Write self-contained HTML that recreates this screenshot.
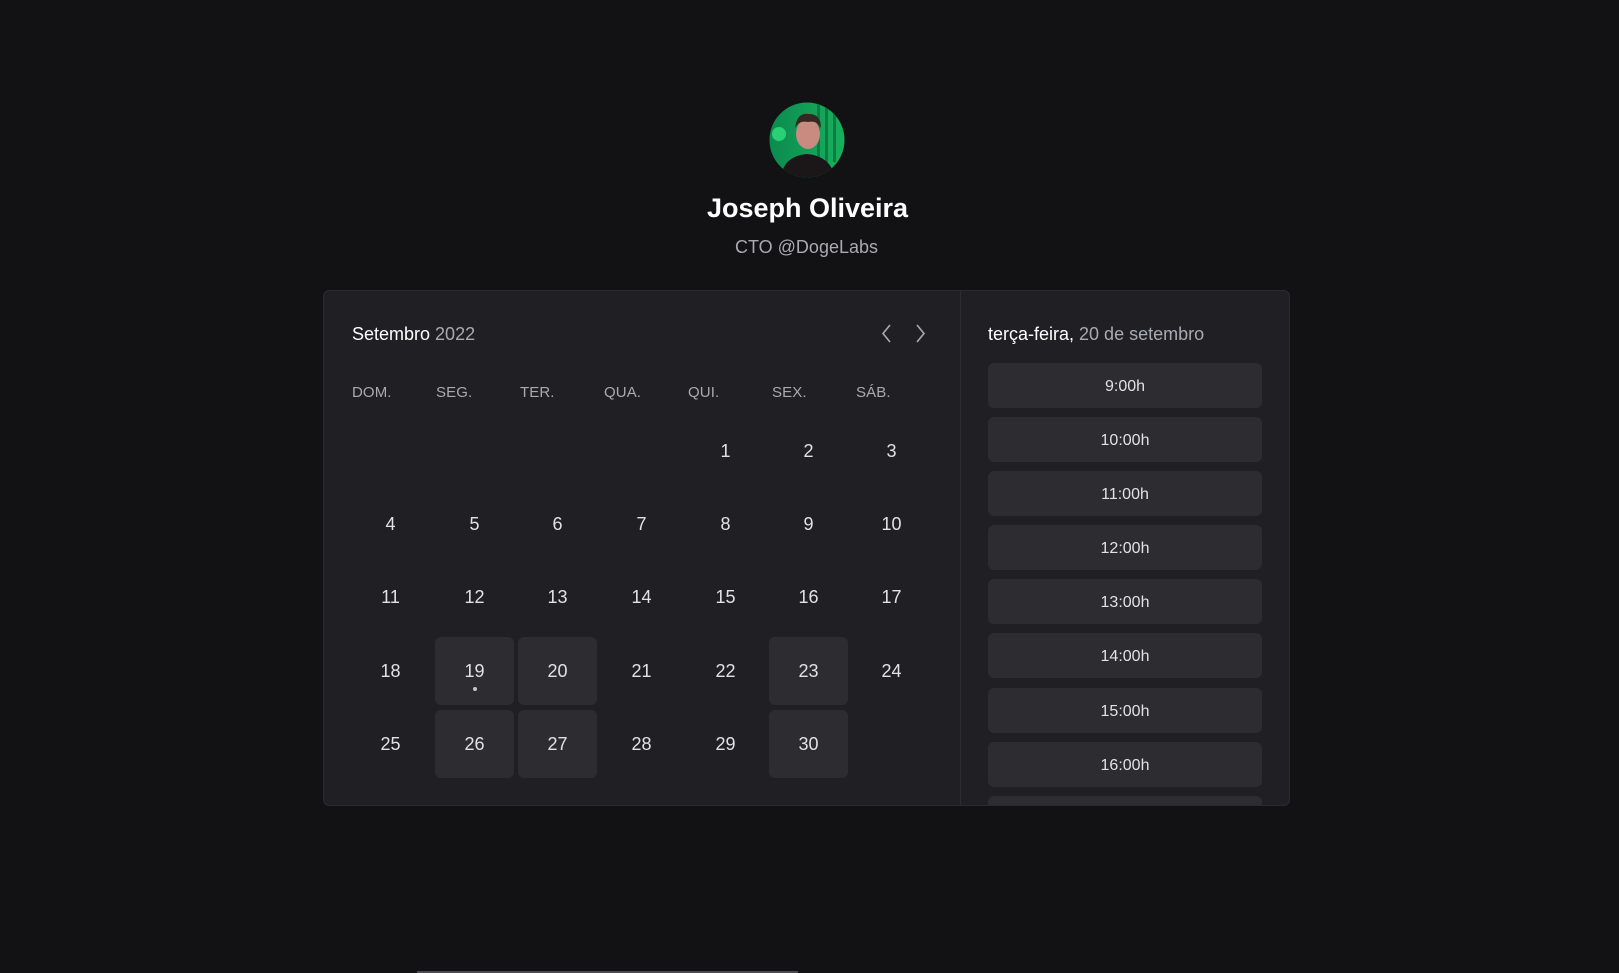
<!DOCTYPE html>
<html><head><meta charset="utf-8"><style>
*{margin:0;padding:0;box-sizing:border-box}
body{width:1619px;height:973px;background:#121214;font-family:"Liberation Sans",sans-serif;position:relative;overflow:hidden;color:#e1e1e6}
.abs{position:absolute}
.card{left:323px;top:290px;width:967px;height:516px;background:#202024;border:1px solid #2a2a2f;border-radius:6px;overflow:hidden}
.div{left:636px;top:0;width:1px;height:516px;background:#2c2c31}
.wd{position:absolute;top:384px;font-size:15px;color:#a9a9b2;letter-spacing:.1px}
.d{position:absolute;width:79px;height:68px;line-height:68px;text-align:center;font-size:18px;color:#e1e1e6;border-radius:6px}
.d.on{background:#2c2c31}
.slot{position:absolute;left:664px;width:274px;height:45px;line-height:47px;text-align:center;background:#2c2c31;border-radius:6px;font-size:16px;color:#e1e1e6}
</style></head><body>
<svg class="abs" style="left:769px;top:102px" width="76" height="76" viewBox="0 0 76 76">
<defs><clipPath id="c"><circle cx="38" cy="38" r="37.5"/></clipPath>
<linearGradient id="g" x1="0" x2="1"><stop offset="0" stop-color="#0c8a4f"/><stop offset="1" stop-color="#18b05e"/></linearGradient></defs>
<g clip-path="url(#c)">
<rect width="76" height="76" fill="url(#g)"/>
<rect x="48" y="0" width="3" height="60" fill="#0e7a44"/><rect x="56" y="0" width="3" height="60" fill="#0e7a44"/><rect x="64" y="0" width="3" height="60" fill="#0e7a44"/>
<circle cx="10" cy="32" r="7" fill="#2ad174"/>
<path d="M12 76 Q14 54 38 52 Q62 54 66 76Z" fill="#1b1618"/>
<ellipse cx="39" cy="32" rx="12" ry="15" fill="#c98a80"/>
<path d="M26 26 Q28 10 40 12 Q52 12 52 26 Q48 18 39 20 Q30 18 26 26Z" fill="#3a2620"/>
</g></svg>
<div class="abs" style="left:0;width:1615px;top:193px;text-align:center;font-size:27px;font-weight:bold;color:#fff">Joseph Oliveira</div>
<div class="abs" style="left:0;width:1613px;top:237px;text-align:center;font-size:18px;color:#a9a9b2">CTO @DogeLabs</div>
<div class="abs card">
<div class="abs div"></div>
</div>
<div class="abs" style="left:352px;top:324px;font-size:18px;color:#fff">Setembro <span style="color:#a9a9b2">2022</span></div>
<svg class="abs" style="left:880px;top:324px" width="50" height="20" viewBox="0 0 50 20"><path d="M10 1 L3 9.5 L10 18" fill="none" stroke="#a9a9b2" stroke-width="1.6"/><path d="M37 1 L44 9.5 L37 18" fill="none" stroke="#a9a9b2" stroke-width="1.6"/></svg>
<div class="wd" style="left:352px">DOM.</div><div class="wd" style="left:436px">SEG.</div><div class="wd" style="left:520px">TER.</div><div class="wd" style="left:604px">QUA.</div><div class="wd" style="left:688px">QUI.</div><div class="wd" style="left:772px">SEX.</div><div class="wd" style="left:856px">SÁB.</div>
<div class="d" style="left:686px;top:417px">1</div><div class="d" style="left:769px;top:417px">2</div><div class="d" style="left:852px;top:417px">3</div>
<div class="d" style="left:351px;top:490px">4</div><div class="d" style="left:435px;top:490px">5</div><div class="d" style="left:518px;top:490px">6</div><div class="d" style="left:602px;top:490px">7</div><div class="d" style="left:686px;top:490px">8</div><div class="d" style="left:769px;top:490px">9</div><div class="d" style="left:852px;top:490px">10</div>
<div class="d" style="left:351px;top:563px">11</div><div class="d" style="left:435px;top:563px">12</div><div class="d" style="left:518px;top:563px">13</div><div class="d" style="left:602px;top:563px">14</div><div class="d" style="left:686px;top:563px">15</div><div class="d" style="left:769px;top:563px">16</div><div class="d" style="left:852px;top:563px">17</div>
<div class="d" style="left:351px;top:637px">18</div><div class="d on" style="left:435px;top:637px">19</div><div class="d on" style="left:518px;top:637px">20</div><div class="d" style="left:602px;top:637px">21</div><div class="d" style="left:686px;top:637px">22</div><div class="d on" style="left:769px;top:637px">23</div><div class="d" style="left:852px;top:637px">24</div>
<div class="abs" style="left:473px;top:687px;width:4px;height:4px;border-radius:50%;background:#c4c4cc"></div>
<div class="d" style="left:351px;top:710px">25</div><div class="d on" style="left:435px;top:710px">26</div><div class="d on" style="left:518px;top:710px">27</div><div class="d" style="left:602px;top:710px">28</div><div class="d" style="left:686px;top:710px">29</div><div class="d on" style="left:769px;top:710px">30</div>
<div class="abs" style="left:988px;top:324px;font-size:18px;color:#fff">terça-feira, <span style="color:#a9a9b2">20 de setembro</span></div>
<div class="abs" style="left:324px;top:291px;width:965px;height:514px;overflow:hidden;border-radius:6px">
<div class="slot" style="top:72px">9:00h</div>
<div class="slot" style="top:126px">10:00h</div>
<div class="slot" style="top:180px">11:00h</div>
<div class="slot" style="top:234px">12:00h</div>
<div class="slot" style="top:288px">13:00h</div>
<div class="slot" style="top:342px">14:00h</div>
<div class="slot" style="top:397px">15:00h</div>
<div class="slot" style="top:451px">16:00h</div>
<div class="slot" style="top:505px"></div>
</div>
<div class="abs" style="left:417px;top:971px;width:381px;height:2px;background:#4a4a50"></div>
</body></html>
